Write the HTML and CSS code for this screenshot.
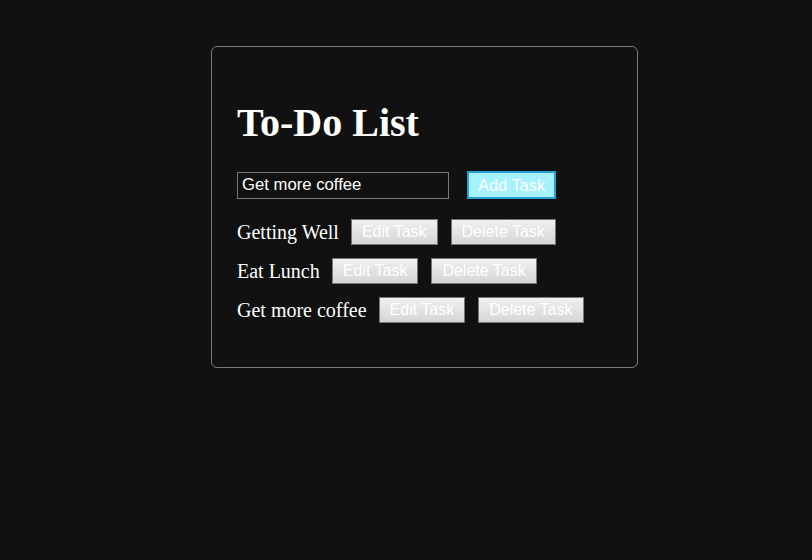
FILE: index.html
```html
<!DOCTYPE html>
<html>
<head>
<meta charset="utf-8">
<link rel="stylesheet" href="styles.css">
</head>
<body>
<div class="card">
  <h1 class="title">To-Do List</h1>
  <div class="add-row">
    <input class="task-input" type="text" value="Get more coffee">
    <button class="btn add-btn">Add Task</button>
  </div>
  <ul class="tasks">
    <li class="task"><span class="task-name">Getting Well</span><button class="btn">Edit Task</button><button class="btn">Delete Task</button></li>
    <li class="task"><span class="task-name">Eat Lunch</span><button class="btn">Edit Task</button><button class="btn">Delete Task</button></li>
    <li class="task"><span class="task-name">Get more coffee</span><button class="btn">Edit Task</button><button class="btn">Delete Task</button></li>
  </ul>
</div>
</body>
</html>
```
FILE: styles.css
```css
html, body {
  margin: 0;
  padding: 0;
  background: #111111;
  color: #ffffff;
  font-family: "Liberation Serif", "Times New Roman", serif;
}
body {
  padding-top: 46px;
}
.card {
  width: 375px;
  margin: 0 auto 0 211px;
  border: 1px solid #7a7a7a;
  border-radius: 6px;
  padding: 35px 25px 44px 25px;
}
.title {
  font-size: 40px;
  font-weight: bold;
  margin: 18px 0 25px 0;
  line-height: 46px;
}
.add-row {
  display: flex;
  align-items: center;
  gap: 18px;
}
.task-input {
  box-sizing: border-box;
  width: 212px;
  height: 27px;
  background: #111111;
  color: #ffffff;
  border: 1px solid #777777;
  font-family: "Liberation Sans", Arial, sans-serif;
  font-size: 16.7px;
  padding: 1px 4px;
  margin: 0;
  outline: none;
}
.btn {
  font-family: "Liberation Sans", Arial, sans-serif;
  font-size: 16px;
  color: #ffffff;
  background: linear-gradient(#f0f0f0, #d5d5d5);
  border: 1px solid #767676;
  padding: 3px 10px;
  margin: 0;
  line-height: 18px;
  border-radius: 0;
}
.add-btn {
  background: #a6f1ff;
  border: 2px solid #2a9fd6;
  padding: 3px 9px 3px 9px;
  font-size: 16.4px;
  line-height: 18px;
}
.tasks {
  list-style: none;
  margin: 20px 0 0 0;
  padding: 0;
  display: flex;
  flex-direction: column;
  gap: 13px;
}
.task {
  display: flex;
  align-items: center;
  gap: 13px;
}
.task-name {
  font-size: 20px;
  margin-right: -1px;
}
```
